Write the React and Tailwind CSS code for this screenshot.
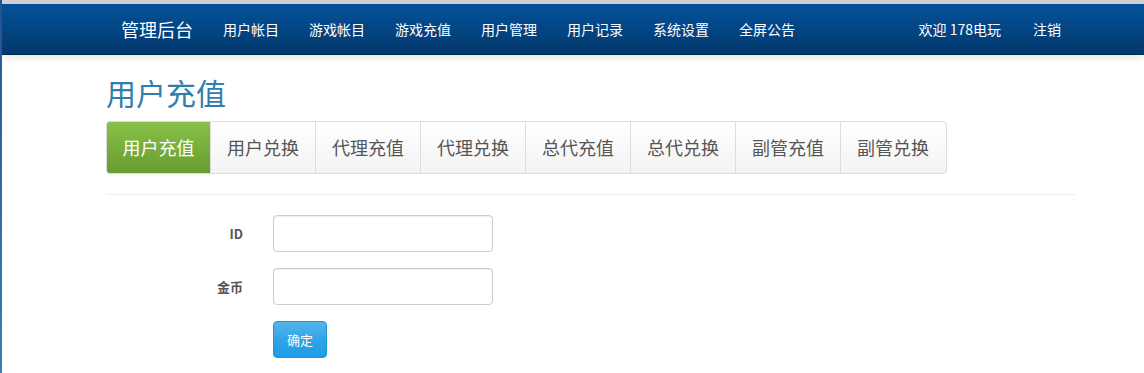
import React from "react";

const FONT = { fontFamily: '"Noto Sans CJK SC", "Liberation Sans", sans-serif' };

const navItems = ["用户帐目", "游戏帐目", "游戏充值", "用户管理", "用户记录", "系统设置", "全屏公告"];
const tabs = ["用户充值", "用户兑换", "代理充值", "代理兑换", "总代充值", "总代兑换", "副管充值", "副管兑换"];

export default function App() {
  return (
    <div className="flex w-[1144px] h-[373px] overflow-hidden bg-white" style={FONT}>
      <div className="w-[2px] shrink-0 bg-gradient-to-b from-[#2a5596] to-[#3a7cc0]" />
      <div className="flex-1 flex flex-col min-w-0">
        <div className="h-[4px] bg-[#d4d4d4] shrink-0" />
        <nav className="h-[51px] shrink-0 bg-gradient-to-b from-[#04529c] to-[#03386c] border-b border-[#02294f] shadow-[0_2px_8px_rgba(0,0,0,0.12)] relative z-10">
          <div className="ml-[104px] w-[970px] h-full flex items-center text-white">
            <span className="text-[18px] pl-[15px] pr-[15px] leading-none">管理后台</span>
            {navItems.map((n) => (
              <span key={n} className="text-[14px] px-[15px] leading-none">{n}</span>
            ))}
            <div className="ml-auto flex items-center">
              <span className="text-[14px] pl-[15px] pr-[17px] leading-none">欢迎 178电玩</span>
              <span className="text-[14px] px-[15px] leading-none">注销</span>
            </div>
          </div>
        </nav>
        <div className="ml-[104px] w-[970px] flex flex-col">
          <h1 className="text-[30px] leading-none text-[#317eac] mt-[22px] font-normal">用户充值</h1>
          <div className="mt-[14px] flex w-[841px] h-[53px] rounded-[4px] border border-[#dddddd] bg-gradient-to-b from-white to-[#f3f3f3] overflow-hidden">
            {tabs.map((t, i) =>
              i === 0 ? (
                <div key={t} className="w-[105px] -m-px h-[53px] flex items-center justify-center text-[18px] text-white bg-gradient-to-b from-[#88c149] to-[#689c30] rounded-l-[4px] border border-[#6a9c34]">
                  {t}
                </div>
              ) : (
                <div key={t} className="w-[105px] h-full flex items-center justify-center text-[18px] text-[#555555] border-l border-[#dddddd]">
                  {t}
                </div>
              )
            )}
          </div>
          <div className="mt-[20px] h-px w-[969px] bg-[#eeeeee]" />
          <div className="mt-[20px] flex flex-col gap-[16px]">
            <div className="flex items-center">
              <label className="w-[137px] text-right text-[13px] font-bold text-[#555555]">ID</label>
              <input className="ml-[30px] w-[220px] h-[37px] rounded-[4px] border border-[#cccccc] shadow-[inset_0_1px_1px_rgba(0,0,0,0.075)] outline-none" />
            </div>
            <div className="flex items-center">
              <label className="w-[137px] text-right text-[13px] font-bold text-[#555555]">金币</label>
              <input className="ml-[30px] w-[220px] h-[37px] rounded-[4px] border border-[#cccccc] shadow-[inset_0_1px_1px_rgba(0,0,0,0.075)] outline-none" />
            </div>
            <div className="flex">
              <button className="ml-[167px] w-[54px] h-[37px] rounded-[4px] text-[13px] text-white bg-gradient-to-b from-[#54b4eb] via-[#2fa4e7] to-[#1d9ce5] border border-[#1b97df]">
                确定
              </button>
            </div>
          </div>
        </div>
      </div>
    </div>
  );
}
